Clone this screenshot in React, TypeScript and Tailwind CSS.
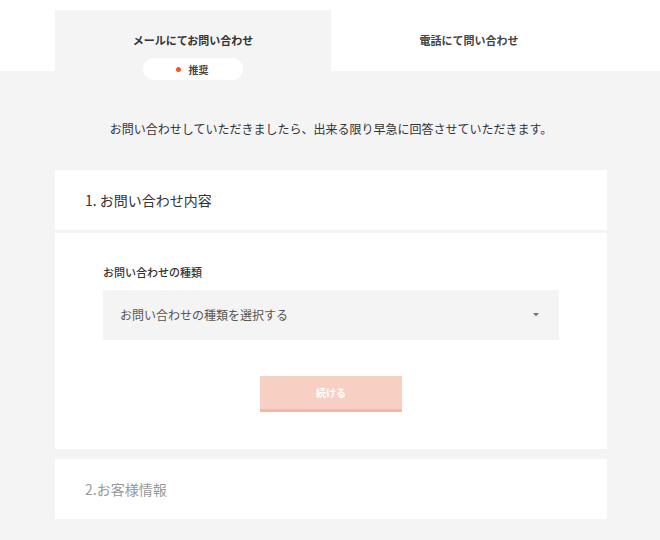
const font = "font-['Noto_Sans_CJK_JP','Noto_Sans',sans-serif]"

function Tabs() {
  return (
    <div className="bg-white pt-[10px]">
      <div className="ml-[55px] w-[552px] grid grid-cols-2 h-[61px]">
        <div className="relative bg-[#f4f4f4] flex justify-center pt-[22px]">
          <span className="text-[11px] leading-[16px] font-bold text-[#333]">
            メールにてお問い合わせ
          </span>
          <div className="absolute left-1/2 -translate-x-1/2 top-[48px] w-[100px] h-[22px] rounded-full bg-white flex items-center justify-center gap-[8px] pr-[2px]">
            <span className="size-[5px] rounded-full bg-[#ee5a2a]" />
            <span className="text-[10px] font-bold text-[#444]">推奨</span>
          </div>
        </div>
        <div className="bg-white flex justify-center pt-[22px]">
          <span className="text-[11px] leading-[16px] font-bold text-[#444]">
            電話にて問い合わせ
          </span>
        </div>
      </div>
    </div>
  )
}

export default function App() {
  return (
    <div className={`${font} min-h-[540px] bg-[#f4f4f4]`}>
      <Tabs />
      <div className="ml-[55px] w-[552px] pt-[49px] pb-[21px]">
        <p className="text-center text-[12px] leading-[18px] text-[#333] mb-[32px]">
          お問い合わせしていただきましたら、出来る限り早急に回答させていただきます。
        </p>

        <section className="flex flex-col gap-[3px]">
          <div className="bg-white h-[60px] flex items-center px-[30px]">
            <h2 className="text-[14px] text-[#333]">1. お問い合わせ内容</h2>
          </div>
          <div className="bg-white px-[48px] pt-[31px] pb-[37px]">
            <label className="block text-[11px] leading-[16px] font-medium text-[#333] mb-[10px]">
              お問い合わせの種類
            </label>
            <div className="h-[50px] bg-[#f4f4f4] flex items-center justify-between pl-[17px] pr-[20px]">
              <span className="text-[12px] text-[#555]">
                お問い合わせの種類を選択する
              </span>
              <svg width="6" height="4" viewBox="0 0 6 4">
                <path d="M0 0h6L3 3.5z" fill="#777" />
              </svg>
            </div>
            <div className="flex justify-center mt-[36px]">
              <button className="w-[142px] h-[36px] bg-[#f8d0c3] border-b-[3px] border-[#f4b7a4] text-white text-[10px] font-bold">
                続ける
              </button>
            </div>
          </div>
        </section>

        <section className="mt-[10px] bg-white h-[60px] flex items-center px-[30px]">
          <h2 className="text-[14px] text-[#999]">2.お客様情報</h2>
        </section>
      </div>
    </div>
  )
}
